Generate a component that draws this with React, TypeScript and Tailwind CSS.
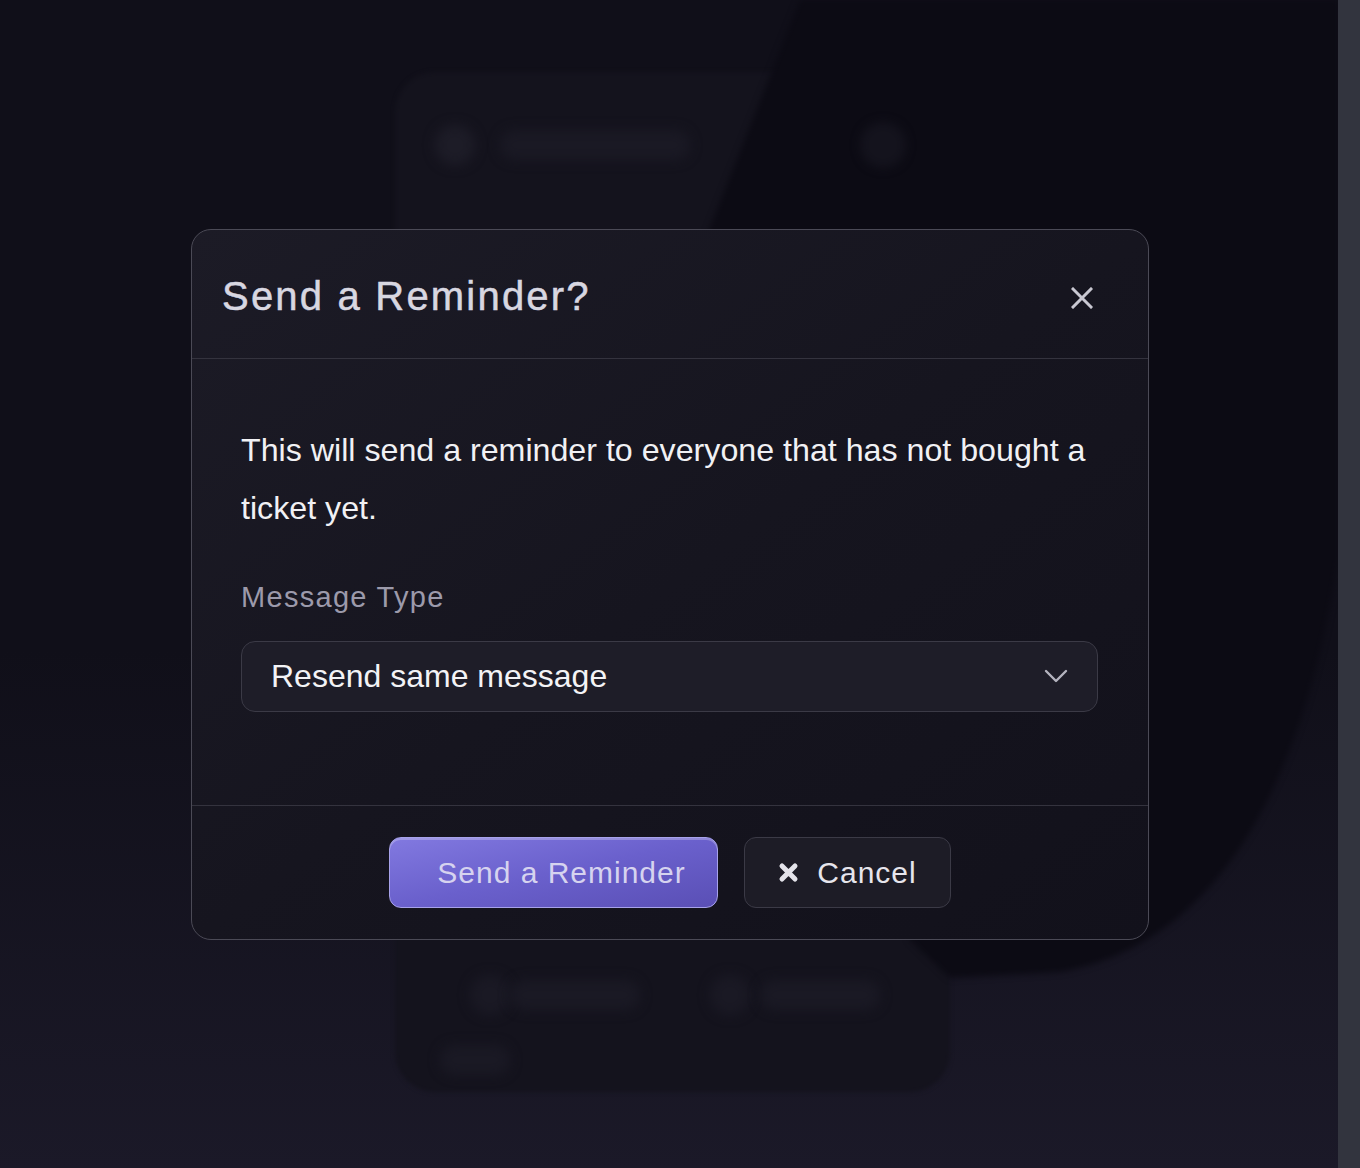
import React from "react";

function CloseIcon() {
  return (
    <svg width="22" height="22" viewBox="0 0 22 22" fill="none">
      <path d="M2 2L20 20M20 2L2 20" stroke="#c9c8d2" strokeWidth="3" strokeLinecap="square" />
    </svg>
  );
}

function Chevron() {
  return (
    <svg width="24" height="14" viewBox="0 0 24 14" fill="none">
      <path d="M2 2L12 12L22 2" stroke="#b4b3bf" strokeWidth="2.4" strokeLinecap="round" strokeLinejoin="round" />
    </svg>
  );
}

function HeavyX() {
  return (
    <svg width="21" height="21" viewBox="0 0 21 21" fill="none">
      <path d="M4 4L17 17M17 4L4 17" stroke="#e4e3ea" strokeWidth="5" strokeLinecap="round" />
    </svg>
  );
}

function BackdropShape() {
  return (
    <svg className="absolute left-0 top-0 blur-[3px]" width="1338" height="1168" viewBox="0 0 1338 1168" fill="none">
      <path
        d="M800 0 L1338 0 L1338 560 C1300 800 1210 945 1060 972 L950 978 L910 940 L705 240 Z"
        fill="#0c0b14"
      />
    </svg>
  );
}

export default function App() {
  return (
    <div
      className="relative flex h-[1168px] w-full overflow-hidden bg-[#100f19]"
      style={{ fontFamily: '"Liberation Sans", Arial, Helvetica, sans-serif' }}
    >
      {/* blurred page behind */}
      <div className="pointer-events-none absolute inset-0">
        <div className="absolute left-0 top-[650px] h-[520px] w-[1338px] bg-gradient-to-b from-transparent to-[#1b1928]" />
        <div className="absolute left-[395px] top-[72px] h-[1020px] w-[555px] rounded-[40px] bg-[#14131d] blur-[2px]" />
        <BackdropShape />
        <div className="absolute left-[435px] top-[125px] h-[40px] w-[40px] rounded-full bg-[#1d1c27] blur-[6px]" />
        <div className="absolute left-[500px] top-[130px] h-[30px] w-[190px] rounded-full bg-[#1a1924] blur-[6px]" />
        <div className="absolute left-[860px] top-[122px] h-[46px] w-[46px] rounded-full bg-[#14131d] blur-[5px]" />
        <div className="absolute left-[470px] top-[975px] h-[40px] w-[40px] rounded-full bg-[#1a1924] blur-[6px]" />
        <div className="absolute left-[510px] top-[980px] h-[30px] w-[130px] rounded-full bg-[#1a1924] blur-[6px]" />
        <div className="absolute left-[710px] top-[975px] h-[40px] w-[40px] rounded-full bg-[#1a1924] blur-[6px]" />
        <div className="absolute left-[760px] top-[980px] h-[30px] w-[120px] rounded-full bg-[#1a1924] blur-[6px]" />
        <div className="absolute left-[440px] top-[1045px] h-[30px] w-[70px] rounded-full bg-[#1a1924] blur-[6px]" />
      </div>

      {/* main area */}
      <div className="relative flex flex-1 items-center justify-center">
        <div className="ml-[2px] flex h-[711px] w-[958px] flex-col overflow-hidden rounded-[20px] border-[1.5px] border-[#4b4a56] bg-gradient-to-br from-[#1c1b26] via-[#16151f] to-[#12111b]">
          {/* header */}
          <div className="flex h-[129px] shrink-0 items-center justify-between border-b border-[#34333e] pl-[30px] pr-[55px] pt-[5px]">
            <h2 className="text-[40px] leading-none tracking-[2.2px] text-[#d8d7e1] [-webkit-text-stroke:0.5px_#d8d7e1]">
              Send a Reminder?
            </h2>
            <button className="mt-[4px] flex h-[22px] w-[22px] items-center justify-center">
              <CloseIcon />
            </button>
          </div>

          {/* body */}
          <div className="flex flex-1 flex-col pl-[49px] pr-[50px] pt-[62px]">
            <p className="text-[32.2px] leading-[58px] text-[#f1f1f4]">
              This will send a reminder to everyone that has not bought a ticket yet.
            </p>
            <label className="mt-[40px] text-[29px] leading-[40px] tracking-[1.3px] text-[#9c9aab]">Message Type</label>
            <div className="mt-[24px] flex h-[71px] items-center justify-between rounded-[14px] border-[1.5px] border-[#3b3a46] bg-[#1e1d28] pl-[29px] pr-[29px]">
              <span className="text-[32px] leading-none text-[#f3f3f6]">Resend same message</span>
              <Chevron />
            </div>
          </div>

          {/* footer */}
          <div className="flex h-[134px] shrink-0 items-center justify-center gap-[26px] border-t border-[#34333e]">
            <button className="flex h-[71px] w-[329px] items-center justify-center rounded-[12px] border-[1.5px] border-[#a7a2ea] bg-gradient-to-br from-[#8279e0] via-[#6a60cc] to-[#5a4fb5] pl-[16px] text-[30px] tracking-[1px] text-[#d6d3ef] shadow-[inset_0_2px_0_rgba(255,255,255,0.25)]">
              Send a Reminder
            </button>
            <button className="flex h-[71px] w-[207px] items-center justify-center gap-[18px] rounded-[12px] border-[1.5px] border-[#3b3a46] bg-[#1d1c26] text-[30px] tracking-[1px] text-[#e6e5ec]">
              <HeavyX />
              <span>Cancel</span>
            </button>
          </div>
        </div>
      </div>

      {/* scrollbar strip */}
      <div className="relative w-[22px] shrink-0 bg-[#32343e]" />
    </div>
  );
}
